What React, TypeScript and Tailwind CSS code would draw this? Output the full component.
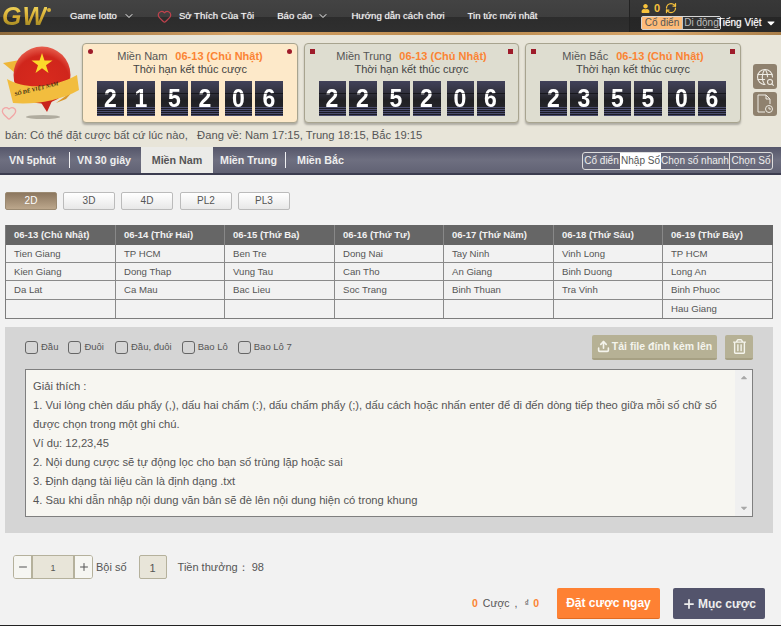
import React from "react";
import { ChevronDown, Heart, Minus, Plus, RefreshCw, Upload } from "lucide-react";
import { FaUser, FaCaretDown, FaRegTrashAlt } from "react-icons/fa";
import { TbWorldSearch } from "react-icons/tb";

const regions = [
  { name: "Miền Nam", digits: "215206", active: true, dot: "rounded-full", w: "w-[216px]" },
  { name: "Miền Trung", digits: "225206", active: false, dot: "", w: "w-[215px]" },
  { name: "Miền Bắc", digits: "235506", active: false, dot: "", w: "w-[216px]" },
];

const days = [
  { title: "06-13 (Chủ Nhật)", w: "w-[110px]", rows: ["Tien Giang", "Kien Giang", "Da Lat", ""] },
  { title: "06-14 (Thứ Hai)", w: "w-[109px]", rows: ["TP HCM", "Dong Thap", "Ca Mau", ""] },
  { title: "06-15 (Thứ Ba)", w: "w-[110px]", rows: ["Ben Tre", "Vung Tau", "Bac Lieu", ""] },
  { title: "06-16 (Thứ Tư)", w: "w-[109px]", rows: ["Dong Nai", "Can Tho", "Soc Trang", ""] },
  { title: "06-17 (Thứ Năm)", w: "w-[110px]", rows: ["Tay Ninh", "An Giang", "Binh Thuan", ""] },
  { title: "06-18 (Thứ Sáu)", w: "w-[109px]", rows: ["Vinh Long", "Binh Duong", "Tra Vinh", ""] },
  { title: "06-19 (Thứ Bảy)", w: "w-[111px]", rows: ["TP HCM", "Long An", "Binh Phuoc", "Hau Giang"] },
];

const notes = [
  "Giải thích :",
  "1. Vui lòng chèn dấu phẩy (,), dấu hai chấm (:), dấu chấm phẩy (;), dấu cách hoặc nhấn enter để đi đến dòng tiếp theo giữa mỗi số chữ số được chọn trong một ghi chú.",
  "Ví dụ: 12,23,45",
  "2. Nội dung cược sẽ tự động lọc cho bạn số trùng lặp hoặc sai",
  "3. Định dạng tài liệu cần là định dạng .txt",
  "4. Sau khi dẫn nhập nội dung văn bản sẽ đè lên nội dung hiện có trong khung",
];

const Digit = ({ value, wide }: { value: string; wide: boolean }) => (
  <div className={`relative h-[35px] flex items-center justify-center overflow-hidden bg-[linear-gradient(#42425a_0,#30303c_35%,#202024_55%,#2a2a30_100%)] text-white font-bold text-[23px] leading-none ${wide ? "w-[28px]" : "w-[27px]"}`}>
    <span className="relative z-10 scale-y-[1.15]">{value}</span>
    <div className="absolute z-20 left-0 right-0 top-[12px] h-px bg-black/50" />
    <div className="absolute left-0 right-0 bottom-0 h-[9px] bg-[repeating-linear-gradient(#4b4d6e_0,#4b4d6e_1px,#1b1b24_1px,#1b1b24_2px)]" />
  </div>
);

const RegionCard = ({ name, digits, active, dot, w }: { name: string; digits: string; active: boolean; dot: string; w: string }) => (
  <div className={`relative ${w} h-[80px] rounded border border-[#a8a48f] shadow-[0_2px_2px_rgba(0,0,0,0.25)] flex flex-col items-center pt-[6px] ${active ? "bg-[#fde9c9]" : "bg-[#deddd0]"}`}>
    <div className={`absolute left-[5px] top-[5px] w-[5px] h-[5px] bg-[#9e1b2a] ${dot}`} />
    <div className={`absolute right-[5px] top-[5px] w-[5px] h-[5px] bg-[#9e1b2a] ${dot}`} />
    <div className="text-[11px] leading-[13px] text-[#555] whitespace-nowrap">
      {name}
      <span className="ml-2 font-bold text-[#fb8434]">06-13 (Chủ Nhật)</span>
    </div>
    <div className="text-[11px] leading-[13px] text-[#444] whitespace-nowrap">Thời hạn kết thúc cược</div>
    <div className="flex mt-[5px]">
      {digits.split("").map((d, i) => (
        <div key={i} className={i === 0 ? "" : i % 2 === 0 ? "ml-[6px]" : "ml-[3px]"}>
          <Digit value={d} wide={i % 2 === 1} />
        </div>
      ))}
    </div>
  </div>
);

const Logo = () => (
  <svg width="82" height="86" viewBox="0 0 82 86" className="shrink-0">
    <defs>
      <radialGradient id="ball" cx="50%" cy="65%" r="65%">
        <stop offset="0%" stopColor="#d92a1e" />
        <stop offset="75%" stopColor="#d0261c" />
        <stop offset="100%" stopColor="#e8604f" />
      </radialGradient>
    </defs>
    <ellipse cx="43" cy="82" rx="17" ry="2" fill="#b0ac9f" />
    <path d="M3 28 L20 25 L20 42 Z" fill="#efb637" />
    <path d="M56 68 L74 55 L66 64 Z" fill="#d9982b" />
    <circle cx="42" cy="40" r="28.5" fill="url(#ball)" />
    <path d="M40 66 L52 66 L47 77 Z" fill="#c9241c" />
    <polygon points="42,18 44.5,25.5 52.5,25.5 46,30.3 48.5,38 42,33.2 35.5,38 38,30.3 31.5,25.5 39.5,25.5" fill="#fbd92a" />
    <path d="M7 44 C28 56 55 52 77 40 L79 55 C60 66 32 70 13 68 Z" fill="#f2bd3e" />
    <text x="0" y="0" transform="translate(15 61) rotate(-14)" fontFamily="Liberation Serif, serif" fontWeight="700" fontStyle="italic" fontSize="5.6" fill="#3a2a10">
      SỔ ĐỀ VIỆT NAM
    </text>
  </svg>
);

const Box = () => <span className="inline-block w-[13px] h-[13px] rounded-[3px] border border-[#666] bg-transparent" />;

export default function App() {
  return (
    <div className="relative w-[781px] h-[626px] overflow-hidden bg-[#f2f2f2] font-['Liberation_Sans',Arial,sans-serif] text-[#555]">
      {/* top nav */}
      <div className="h-[32px] flex bg-[linear-gradient(#434343_0,#3e3e3e_52%,#2c2c2c_53%,#2f2f2f_100%)] text-[#f4f4f4] text-[9.6px] [text-shadow:0_0_1px_rgba(255,255,255,0.6)]">
        <div className="relative w-[70px] pl-[2px] flex items-center">
          <span className="font-bold italic text-[25px] leading-none tracking-[1px] bg-[linear-gradient(#f6dc62,#d3a82e_55%,#8f7f22)] bg-clip-text text-transparent [text-shadow:none]">GW</span>
          <span className="absolute left-[47px] top-[8px] w-[4px] h-[4px] rounded-full bg-[#d9b23a]" />
        </div>
        <div className="flex items-center">
          <span className="whitespace-nowrap">Game lotto</span>
          <ChevronDown className="w-[12px] h-[12px] ml-[6px]" />
          <Heart className="w-[15px] h-[15px] ml-[22px] text-[#c0424d]" />
          <span className="ml-[7px] whitespace-nowrap">Sở Thích Của Tôi</span>
          <span className="ml-[23px] whitespace-nowrap">Báo cáo</span>
          <ChevronDown className="w-[12px] h-[12px] ml-[5px]" />
          <span className="ml-[22px] whitespace-nowrap">Hướng dẫn cách chơi</span>
          <span className="ml-[23px] whitespace-nowrap">Tin tức mới nhất</span>
        </div>
        <div className="ml-auto w-[152px] bg-[linear-gradient(#383838_0,#343434_52%,#262626_53%,#282828_100%)] border-l border-[#222] pl-[11px]">
          <div className="flex items-center h-[15px] text-[#f7c23c] pt-[1px]">
            <FaUser className="w-[9px] h-[9px]" />
            <span className="ml-[4px] text-[11px] font-bold [text-shadow:none]">0</span>
            <RefreshCw className="w-[12px] h-[12px] ml-[5px]" strokeWidth={2.5} />
          </div>
          <div className="flex items-center text-[10px] [text-shadow:none]">
            <div className="flex w-[80px] h-[14px] border border-white/80 rounded-[2px] leading-[12px]">
              <span className="w-[40px] bg-[#fdbb78] text-[#555] text-center">Cổ điển</span>
              <span className="w-[38px] bg-[#333] text-[#bbb] text-center border-l border-white/70 whitespace-nowrap">Di động</span>
            </div>
            <span className="ml-[-4px] text-white whitespace-nowrap [text-shadow:0_0_1px_rgba(255,255,255,0.6)]">Tiếng Việt</span>
            <FaCaretDown className="w-[12px] h-[12px] ml-[4px] text-white" />
          </div>
        </div>
      </div>
      <div className="h-[3px] bg-[linear-gradient(90deg,#8e6a3c,#d6a266_30%,#b98a4e_60%,#d9a76b_85%,#a87d48)]" />

      {/* header with countdowns */}
      <div className="h-[112px] bg-[#e8e5d9] relative">
        <div className="flex items-start">
          <div className="w-[82px] relative">
            <Logo />
            <Heart className="absolute left-[1px] top-[70px] w-[16px] h-[16px] text-[#f2a6a6]" />
          </div>
          <div className="flex gap-[6px] pt-[8px]">
            {regions.map((r) => (
              <RegionCard key={r.name} {...r} />
            ))}
          </div>
          <div className="ml-[12px] pt-[29px] flex flex-col gap-[3px]">
            <div className="w-[24px] h-[25px] rounded-[3px] bg-[#8f816e] flex items-center justify-center text-[#efece4]">
              <TbWorldSearch className="w-[20px] h-[20px]" strokeWidth={1.3} />
            </div>
            <div className="w-[24px] h-[24px] rounded-[3px] bg-[#8f816e] flex items-center justify-center">
              <svg width="18" height="20" viewBox="0 0 18 20" fill="none" stroke="#efece4" strokeWidth="1">
                <path d="M2 1 H10 L14 5 V10 M2 1 V18 H9 M10 1 V5 H14" />
                <circle cx="13" cy="15" r="3.5" />
                <path d="M13 13 V15 H15" />
              </svg>
            </div>
          </div>
        </div>
        <div className="absolute left-[5px] top-[93px] text-[11.2px] leading-[14px] text-[#555] whitespace-pre">
          bán: Có thể đặt cược bất cứ lúc nào,{"   "}Đang về: Nam 17:15, Trung 18:15, Bắc 19:15
        </div>
      </div>

      {/* lottery tabs */}
      <div className="h-[28px] flex items-start bg-[linear-gradient(#55566a_0,#6e6f80_50%,#616274_100%)] border-b-[2px] border-[#3c3d50] text-[10.7px] font-bold text-[#eee]">
        <div className="w-[69px] pl-[9px] h-[26px] leading-[26px]">VN 5phút</div>
        <div className="w-px h-[16px] mt-[5px] bg-white/90" />
        <div className="w-[71px] pl-[7px] h-[26px] leading-[26px] whitespace-nowrap">VN 30 giây</div>
        <div className="w-[72px] h-[26px] leading-[26px] text-center bg-[#ebebe8] text-[#555]">Miền Nam</div>
        <div className="w-[72px] pl-[7px] h-[26px] leading-[26px] whitespace-nowrap">Miền Trung</div>
        <div className="w-px h-[16px] mt-[5px] bg-white/90" />
        <div className="pl-[11px] h-[26px] leading-[26px] whitespace-nowrap">Miền Bắc</div>
        <div className="ml-auto mr-[8px] mt-[5px] flex h-[18px] border border-[#ddd] rounded-[3px] overflow-hidden text-[10px] leading-[16px] font-normal">
          <span className="w-[37px] text-center whitespace-nowrap">Cổ điển</span>
          <span className="w-[41px] text-center bg-white text-[#555] whitespace-nowrap">Nhập Số</span>
          <span className="w-[69px] text-center border-r border-[#ddd] whitespace-nowrap">Chọn số nhanh</span>
          <span className="w-[42px] text-center whitespace-nowrap">Chọn Số</span>
        </div>
      </div>

      {/* type buttons */}
      <div className="flex pl-[5px] pt-[17px] gap-[6px] text-[10px]">
        <div className="w-[52px] h-[18px] rounded-[2px] border border-[#9b8a72] bg-[linear-gradient(#8c775f,#bca78c)] text-white text-center leading-[16px]">2D</div>
        <div className="w-[52px] h-[18px] rounded-[2px] border border-[#bbb] bg-[linear-gradient(#fff,#e8e8e8)] text-center leading-[16px]">3D</div>
        <div className="w-[52px] h-[18px] rounded-[2px] border border-[#bbb] bg-[linear-gradient(#fff,#e8e8e8)] text-center leading-[16px]">4D</div>
        <div className="ml-px w-[52px] h-[18px] rounded-[2px] border border-[#bbb] bg-[linear-gradient(#fff,#e8e8e8)] text-center leading-[16px]">PL2</div>
        <div className="w-[52px] h-[18px] rounded-[2px] border border-[#bbb] bg-[linear-gradient(#fff,#e8e8e8)] text-center leading-[16px]">PL3</div>
      </div>

      {/* schedule table */}
      <div className="flex mx-[5px] mt-[15px] w-[768px] border-b border-r border-[#7d7d7d] text-[9.6px]">
        {days.map((d, i) => (
          <div key={d.title} className={`${d.w} shrink-0 ${i === 0 ? "border-l border-[#7d7d7d]" : ""}`}>
            <div className={`h-[20px] bg-[#666] text-[#f2f2f2] font-bold text-[9.5px] leading-[19px] whitespace-nowrap ${i === 0 ? "pl-[8px]" : "pl-[8px] border-l border-[#888]"}`}>{d.title}</div>
            {d.rows.map((r, j) => (
              <div key={j} className={`${j === 2 ? "h-[19px]" : "h-[18px]"} leading-[18px] border-b border-[#8a8a8a] last:border-b-0 ${i === 0 ? "pl-[8px]" : "pl-[8px] border-l"}`}>
                {r}
              </div>
            ))}
          </div>
        ))}
      </div>

      {/* number entry */}
      <div className="mx-[5px] mt-[8px] w-[768px] h-[206px] bg-[#d5d5d5] px-[20px]">
        <div className="h-[42px] flex items-start text-[9.5px]">
          <div className="flex items-center gap-[3px] pt-[13px]"><Box />Đầu</div>
          <div className="flex items-center gap-[3px] pt-[13px] ml-[10px]"><Box />Đuôi</div>
          <div className="flex items-center gap-[3px] pt-[13px] ml-[11px]"><Box />Đầu, đuôi</div>
          <div className="flex items-center gap-[3px] pt-[13px] ml-[10px]"><Box />Bao Lô</div>
          <div className="flex items-center gap-[3px] pt-[13px] ml-[10px]"><Box />Bao Lô 7</div>
          <div className="ml-auto mt-[8px] w-[125px] h-[25px] rounded-[2px] bg-[#b6b195] border-b-2 border-[#a6a083] flex items-center justify-center gap-[2px] text-[#f4f4ec] font-bold text-[10.5px] whitespace-nowrap">
            <Upload className="w-[13px] h-[13px]" strokeWidth={3} />
            Tải file đính kèm lên
          </div>
          <div className="ml-[8px] mt-[8px] w-[28px] h-[25px] rounded-[2px] bg-[#b6b195] border-b-2 border-[#a6a083] flex items-center justify-center text-[#f4f4ec]">
            <FaRegTrashAlt className="w-[13px] h-[15px]" />
          </div>
        </div>
        <div className="flex w-[728px] h-[148px] border border-[#7f7f7f] bg-[#f7f6f1]">
          <div className="flex-1 px-[7px] pt-[7px] text-[11.2px] leading-[19px] text-[#555]">
            {notes.map((n) => (
              <p key={n}>{n}</p>
            ))}
          </div>
          <div className="w-[17px] bg-[#f0f0f0] flex flex-col justify-between items-center py-[3px] text-[#a8a8a8]">
            <FaCaretDown className="w-[10px] h-[10px] rotate-180" />
            <FaCaretDown className="w-[10px] h-[10px]" />
          </div>
        </div>
      </div>

      {/* multiplier */}
      <div className="flex items-center pl-[13px] mt-[22px] text-[11px]">
        <div className="flex w-[80px] h-[24px] rounded-[3px] border border-[#b5b19c] overflow-hidden">
          <div className="w-[19px] flex items-center justify-center bg-[#f6f6f2] border-r-2 border-[#b5b19c]"><Minus className="w-[12px] h-[12px]" /></div>
          <div className="w-[40px] bg-[#e8e5d9] text-center leading-[24px] text-[9px]">1</div>
          <div className="flex-1 flex items-center justify-center bg-[#f6f6f2] border-l-2 border-[#b5b19c]"><Plus className="w-[12px] h-[12px]" /></div>
        </div>
        <span className="ml-[3px]">Bội số</span>
        <div className="ml-[12px] w-[28px] h-[24px] rounded-[2px] border border-[#b5b19c] bg-[#e8e5d9] text-center leading-[24px]">1</div>
        <span className="ml-[11px] whitespace-pre">Tiền thưởng： 98</span>
      </div>

      {/* actions */}
      <div className="flex items-center pl-[472px] mt-[9px]">
        <span className="text-[10.5px] font-bold text-[#fb8434]">0</span>
        <span className="text-[10.5px] ml-[5px]">Cược</span>
        <span className="text-[10.5px] ml-[5px]">,</span>
        <span className="text-[9px] ml-[7px]">₫</span>
        <span className="text-[10.5px] font-bold text-[#fb8434] ml-[4px]">0</span>
        <div className="ml-[18px] w-[103px] h-[31px] rounded-[2px] bg-[#fe8133] border-b border-[#e06a20] text-white font-bold text-[12px] flex items-center justify-center whitespace-nowrap">Đặt cược ngay</div>
        <div className="ml-[13px] w-[92px] h-[31px] rounded-[2px] bg-[#53546c] text-[#eee] font-bold text-[12px] flex items-center justify-center whitespace-nowrap">
          <Plus className="w-[14px] h-[14px] mr-[2px]" strokeWidth={3} />
          Mục cược
        </div>
      </div>
      <div className="absolute left-0 right-0 bottom-0 h-px bg-[#222]" />
    </div>
  );
}
